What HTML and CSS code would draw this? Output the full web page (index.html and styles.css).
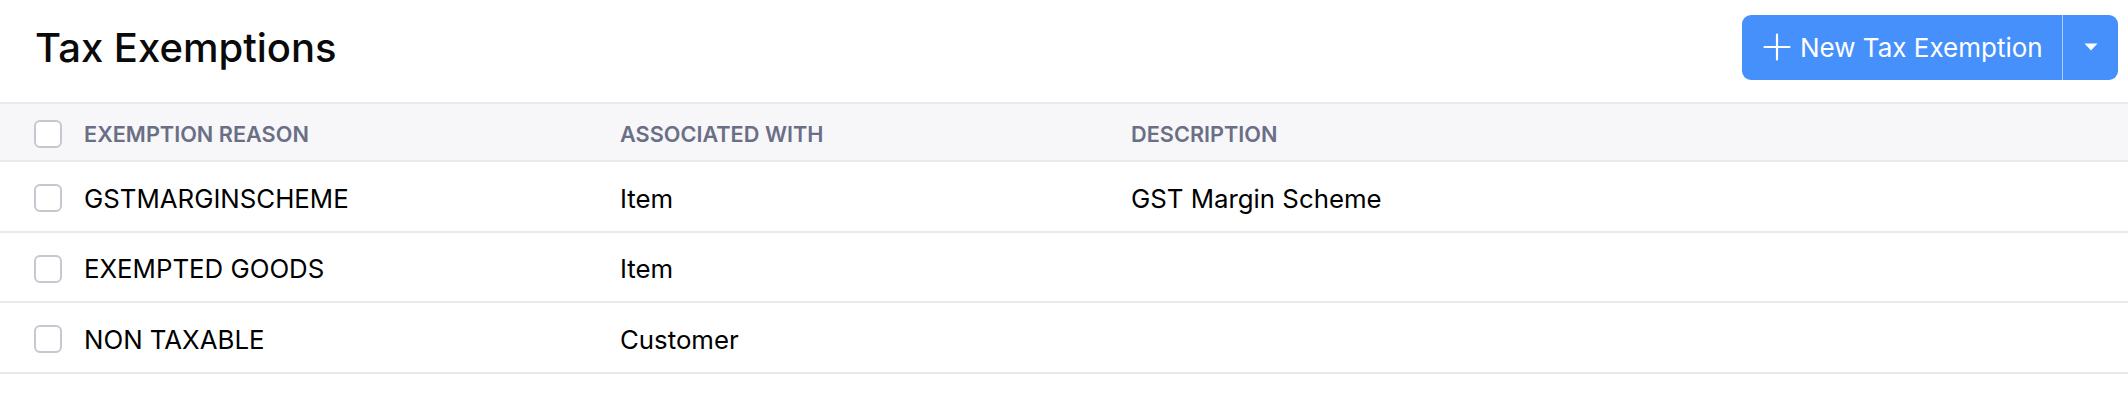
FILE: index.html
```html
<!DOCTYPE html>
<html lang="en">
<head>
<meta charset="utf-8">
<title>Tax Exemptions</title>
<link rel="stylesheet" href="styles.css">
</head>
<body>
<div class="page">
  <header class="page-header">
    <h1 class="page-title">Tax Exemptions</h1>
    <div class="split-btn">
      <button class="split-btn__main" type="button">
        <svg class="split-btn__plus" viewBox="0 0 28 28" width="28" height="28" aria-hidden="true">
          <path d="M14 1.5V26.5M1.5 14H26.5" stroke="#fff" stroke-width="2.2" stroke-linecap="round" fill="none"/>
        </svg>
        <span>New Tax Exemption</span>
      </button>
      <span class="split-btn__divider"></span>
      <button class="split-btn__caret" type="button" aria-label="More">
        <svg viewBox="0 0 14 8" width="14" height="8" aria-hidden="true">
          <path d="M0.5 0.5H13.5L7 7.5Z" fill="#fff"/>
        </svg>
      </button>
    </div>
  </header>

  <div class="table">
    <div class="row row--head">
      <div class="cell cell--check"><span class="checkbox"></span></div>
      <div class="cell">EXEMPTION REASON</div>
      <div class="cell">ASSOCIATED WITH</div>
      <div class="cell">DESCRIPTION</div>
    </div>
    <div class="row">
      <div class="cell cell--check"><span class="checkbox"></span></div>
      <div class="cell">GSTMARGINSCHEME</div>
      <div class="cell">Item</div>
      <div class="cell">GST Margin Scheme</div>
    </div>
    <div class="row">
      <div class="cell cell--check"><span class="checkbox"></span></div>
      <div class="cell">EXEMPTED GOODS</div>
      <div class="cell">Item</div>
      <div class="cell"></div>
    </div>
    <div class="row">
      <div class="cell cell--check"><span class="checkbox"></span></div>
      <div class="cell">NON TAXABLE</div>
      <div class="cell">Customer</div>
      <div class="cell"></div>
    </div>
  </div>
</div>
</body>
</html>
```

FILE: styles.css
```css
* {
  box-sizing: border-box;
}

html, body {
  margin: 0;
  padding: 0;
  background: #ffffff;
}

body {
  font-family: Inter, "Noto Sans", "Liberation Sans", sans-serif;
  color: #000000;
}

.page {
  width: 2128px;
}

.page-header {
  height: 94px;
  display: flex;
  align-items: center;
  justify-content: space-between;
  padding: 0 10px 0 35px;
  margin-bottom: 8px;
}

.page-title {
  margin: 0;
  font-size: 40px;
  font-weight: 500;
  letter-spacing: 0;
  color: #0a0a0a;
  line-height: 1;
  padding-top: 2px;
}

.split-btn {
  display: flex;
  align-items: stretch;
  height: 65px;
  background: #4690fb;
  border-radius: 9px;
  overflow: hidden;
}

.split-btn__main {
  display: flex;
  align-items: center;
  gap: 9px;
  border: 0;
  background: transparent;
  color: #ffffff;
  font-family: inherit;
  font-size: 26px;
  font-weight: 400;
  padding: 0 18px 0 21px;
  width: 320px;
  cursor: pointer;
}

.split-btn__plus {
  flex: none;
  width: 28px;
  height: 28px;
}

.split-btn__divider {
  width: 1px;
  background: rgba(255, 255, 255, 0.55);
}

.split-btn__caret {
  width: 55px;
  border: 0;
  background: transparent;
  display: flex;
  align-items: center;
  justify-content: center;
  padding: 0;
  cursor: pointer;
}

.table {
  width: 100%;
}

.row {
  display: grid;
  grid-template-columns: 84px 536px 511px 1fr;
  align-items: center;
  height: 70.5px;
  border-bottom: 2px solid #e9e9f0;
  font-size: 25.8px;
  color: #000000;
  padding-top: 4px;
}

.row--head {
  height: 60px;
  border-top: 2px solid #e9e9f0;
  background: #f7f7fa;
  font-size: 21.7px;
  font-weight: 600;
  color: #6b6f86;
  padding-top: 3px;
}

.cell {
  white-space: nowrap;
}

.cell--check {
  padding-left: 34px;
  display: flex;
  align-items: center;
}

.checkbox {
  display: block;
  width: 28px;
  height: 28px;
  border: 2px solid #c6c8cf;
  border-radius: 6px;
  background: #ffffff;
}
```
